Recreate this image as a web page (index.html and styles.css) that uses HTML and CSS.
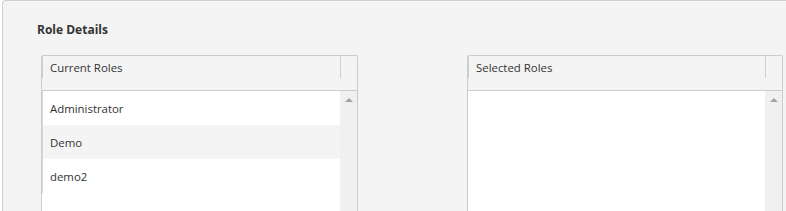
FILE: index.html
```html
<!DOCTYPE html>
<html>
<head>
<meta charset="utf-8">
<link rel="stylesheet" href="styles.css">
</head>
<body>
<div class="panel">
  <div class="title">Role Details</div>
  <div class="lists">
    <div class="box">
      <div class="head">
        <div class="head-cell">Current Roles</div>
        <div class="head-gap"></div>
      </div>
      <div class="body">
        <div class="rows">
          <div class="row">Administrator</div>
          <div class="row alt">Demo</div>
          <div class="row">demo2</div>
        </div>
        <div class="scroll"><span class="arrow"></span></div>
      </div>
    </div>
    <div class="box">
      <div class="head">
        <div class="head-cell">Selected Roles</div>
        <div class="head-gap"></div>
      </div>
      <div class="body">
        <div class="rows empty"></div>
        <div class="scroll"><span class="arrow"></span></div>
      </div>
    </div>
  </div>
</div>
</body>
</html>
```

FILE: styles.css
```css
html, body {
  margin: 0;
  padding: 0;
  background: #ffffff;
  overflow: hidden;
}
body {
  font-family: "Open Sans", "Noto Sans", sans-serif;
  color: #333333;
  font-size: 11.4px;
}
.panel {
  margin-left: 2px;
  height: 260px;
  background: #f4f4f4;
  border-top: 1px solid #cfcfcf;
  border-left: 1px solid #cfcfcf;
  border-top-left-radius: 4px;
  padding: 0 0 0 34px;
}
.title {
  font-weight: bold;
  font-size: 12px;
  line-height: 14px;
  padding-top: 22px;
  height: 54px;
  box-sizing: border-box;
}
.lists {
  display: grid;
  grid-template-columns: 317px 316px;
  column-gap: 109px;
  margin-left: 4px;
}
.box {
  border: 1px solid #cccccc;
  border-bottom: none;
  border-radius: 2px 2px 0 0;
  background: #f4f4f4;
  height: 200px;
  display: flex;
  flex-direction: column;
}
.head {
  display: flex;
  height: 34px;
  border-bottom: 1px solid #cccccc;
}
.head-cell {
  flex: 1;
  height: 22px;
  border-left: 1px solid #cfcfcf;
  border-right: 1px solid #cfcfcf;
  padding-left: 7px;
  line-height: 24px;
}
.head-gap {
  width: 16px;
}
.body {
  flex: 1;
  display: flex;
  background: #ffffff;
}
.rows {
  flex: 1;
  align-self: flex-start;
  border-left: 1px solid #d6d6d6;
}
.rows.empty {
  border-left: none;
}
.row {
  height: 34px;
  line-height: 35px;
  padding-left: 7px;
}
.row.alt {
  background: #f4f4f4;
}
.scroll {
  width: 17px;
  background: #f0f0f0;
  position: relative;
}
.arrow {
  position: absolute;
  left: 5px;
  top: 7px;
  width: 0;
  height: 0;
  border-left: 4px solid transparent;
  border-right: 4px solid transparent;
  border-bottom: 4px solid #a3a3a3;
}
```
